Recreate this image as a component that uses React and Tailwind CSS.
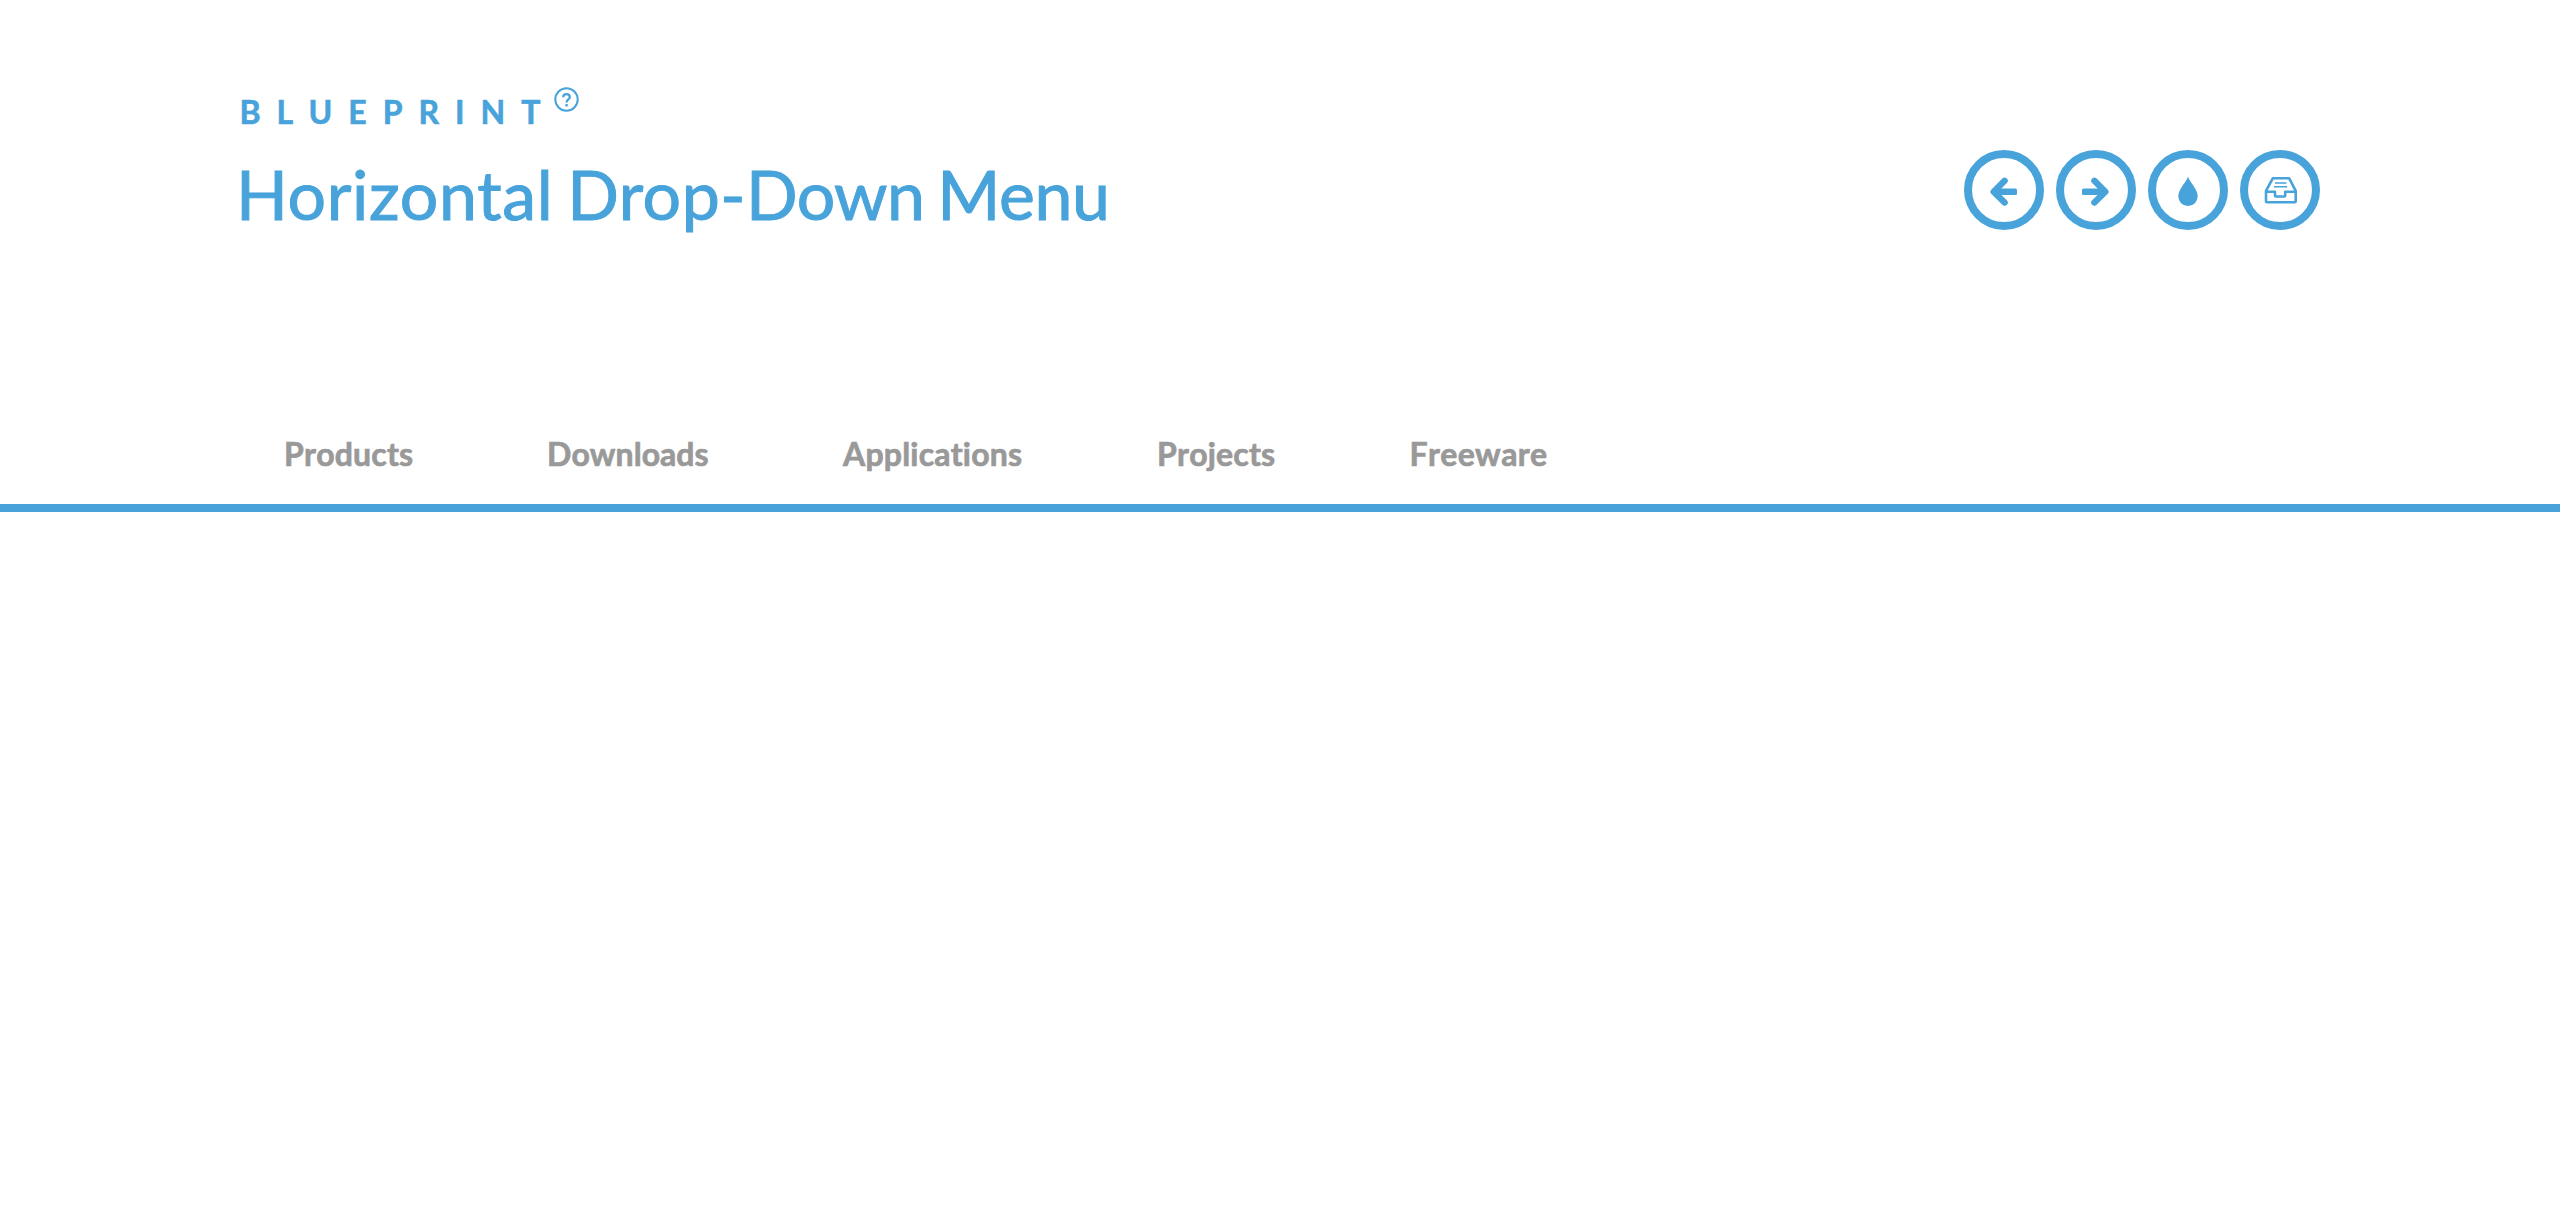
const Ring = ({ children }) => (
  <a className="flex size-20 items-center justify-center rounded-full border-8 border-[#47a3da] text-[#47a3da]">
    <svg className="size-10" viewBox="0 0 40 40" fill="none" stroke="currentColor">{children}</svg>
  </a>
);

const Arrow = () => (
  <>
    <path d="M20.6 10.8L9.7 21.7l10.9 10.9" strokeWidth="6.4" strokeLinecap="round" strokeLinejoin="round" />
    <rect x="11" y="18.4" width="22" height="6.6" rx="1.5" fill="currentColor" stroke="none" />
  </>
);

const items = [
  ['Products', 'w-[263px] tracking-[0.2px]'],
  ['Downloads', 'w-[296px] tracking-[0.05px]'],
  ['Applications', 'w-[314px] tracking-[0.2px]'],
  ['Projects', 'w-[252.5px] tracking-[0.2px]'],
  ['Freeware', 'tracking-[0.35px]'],
];

export default function App() {
  return (
    <div className="h-[1220px] bg-white font-['Lato',sans-serif] [font-variant-ligatures:none]">
      <header className="flex h-[380px] items-start justify-between pr-[240px] pl-[236px] pt-[84px] text-[#47a3da]">
        <div>
          <div className="flex h-[58px] pl-[3.5px]">
            <span className="pt-2 text-[32px] leading-[39px] font-bold tracking-[16px] [-webkit-text-stroke:0.6px]">BLUEPRINT</span>
            <svg className="mt-[2.5px] -ml-[2px] size-[25px]" viewBox="0 0 25 25" fill="none" stroke="currentColor" strokeWidth="2">
              <circle cx="12.5" cy="12.5" r="11.2" />
              <path d="M9.2 10.2c0-4.2 6.6-4.2 6.6 0 0 2.2-3.2 2.4-3.2 5.2M12.6 17v2.4" strokeWidth="2.3" />
            </svg>
          </div>
          <h1 className="text-[68px] leading-[103px] whitespace-nowrap [-webkit-text-stroke:1px]">
            <span className="tracking-[0.65px]">Horizontal</span>
            <span className="-ml-[4px] tracking-[0.5px]"> Drop-</span>
            <span className="tracking-[-0.6px]">Down</span>
            <span className="-ml-[4px] tracking-[-0.4px]"> Menu</span>
          </h1>
        </div>
        <nav className="mt-[66px] flex gap-3">
          <Ring><Arrow /></Ring>
          <Ring><g transform="matrix(-1 0 0 1 39 0)"><Arrow /></g></Ring>
          <Ring><path fill="currentColor" stroke="none" d="M20 6.5C21.5 12 29.7 19 29.7 26.3a9.7 9.7 0 0 1-19.4 0C10.3 19 18.5 12 20 6.5z" /></Ring>
          <Ring>
            <path strokeWidth="2.6" strokeLinejoin="round" d="M12.8 8.3h16.4l6.5 12.5v10.5a1 1 0 0 1-1 1H7a1 1 0 0 1-1-1V20.8zM6 21.8h9v3.5a1.2 1.2 0 0 0 1.2 1.2H24a1.2 1.2 0 0 0 1.2-1.2v-3.5h10.5" />
            <path strokeWidth="1.6" d="M15 13h11.4M14 16.7h13.2" />
          </Ring>
        </nav>
      </header>
      <nav className="flex h-[132px] border-b-8 border-[#47a3da] pt-[50px] pl-[284px] text-[32px] leading-[48px] font-bold text-[#999] [font-kerning:none] [-webkit-text-stroke:0.7px]">
        {items.map(([label, cls]) => <a key={label} className={cls}>{label}</a>)}
      </nav>
    </div>
  );
}
